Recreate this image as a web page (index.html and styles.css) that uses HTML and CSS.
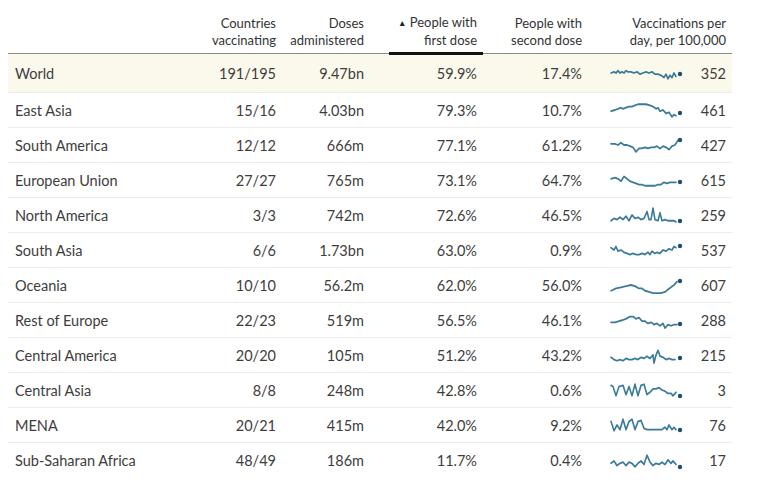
FILE: index.html
```html
<!DOCTYPE html>
<html>
<head>
<meta charset="utf-8">
<link rel="stylesheet" href="styles.css">
</head>
<body>
<div class="table">
  <div class="row head">
    <div class="cell name"></div>
    <div class="cell num">Countries<br>vaccinating</div>
    <div class="cell num">Doses<br>administered</div>
    <div class="cell num sorted"><span class="tri">▲</span> People with<br>first dose</div>
    <div class="cell num">People with<br>second dose</div>
    <div class="cell num wide">Vaccinations per<br>day, per 100,000</div>
  </div>

  <div class="row world">
    <div class="cell name">World</div>
    <div class="cell num">191/195</div>
    <div class="cell num">9.47bn</div>
    <div class="cell num first">59.9%</div>
    <div class="cell num">17.4%</div>
    <div class="cell spark"><svg viewBox="0 0 74 16" width="74" height="16"><polyline points="1,8 4,7 6,8 8,6 10,8 12,7 14,8 16,6 18,7 21,7 24,8 27,7 30,9 33,8 36,7 39,8 42,7 45,9 48,9 51,10 54,12 56,9 58,13 60,10 62,12 64,8 66,11"/><circle cx="70" cy="9" r="2.2"/></svg></div>
    <div class="cell num val">352</div>
  </div>

  <div class="row">
    <div class="cell name">East Asia</div>
    <div class="cell num">15/16</div>
    <div class="cell num">4.03bn</div>
    <div class="cell num first">79.3%</div>
    <div class="cell num">10.7%</div>
    <div class="cell spark"><svg viewBox="0 0 74 16" width="74" height="16"><polyline points="1,9 5,8 8,7 11,6 13,7 16,6 19,5 22,5 25,4 28,3 32,3 36,3 40,4 43,5 46,7 48,6 50,9 53,8 56,11 59,10 62,14 64,12 66,13"/><circle cx="70" cy="11" r="2.2"/></svg></div>
    <div class="cell num val">461</div>
  </div>

  <div class="row">
    <div class="cell name">South America</div>
    <div class="cell num">12/12</div>
    <div class="cell num">666m</div>
    <div class="cell num first">77.1%</div>
    <div class="cell num">61.2%</div>
    <div class="cell spark"><svg viewBox="0 0 74 16" width="74" height="16"><polyline points="1,7 5,7 8,8 11,6 14,8 17,8 20,9 23,10 26,14 29,11 32,11 35,10 38,11 41,10 44,10 47,9 50,11 53,9 56,10 59,12 62,9 65,8 68,4"/><circle cx="70" cy="3" r="2.2"/></svg></div>
    <div class="cell num val">427</div>
  </div>

  <div class="row">
    <div class="cell name">European Union</div>
    <div class="cell num">27/27</div>
    <div class="cell num">765m</div>
    <div class="cell num first">73.1%</div>
    <div class="cell num">64.7%</div>
    <div class="cell spark"><svg viewBox="0 0 74 16" width="74" height="16"><polyline points="1,7 5,6 8,7 11,9 14,5 17,7 20,9 23,10 26,11 29,12 32,12 35,13 38,13 42,13 45,13 48,12 51,12 54,10 57,11 60,10 63,10 66,10"/><circle cx="70" cy="10" r="2.2"/></svg></div>
    <div class="cell num val">615</div>
  </div>

  <div class="row">
    <div class="cell name">North America</div>
    <div class="cell num">3/3</div>
    <div class="cell num">742m</div>
    <div class="cell num first">72.6%</div>
    <div class="cell num">46.5%</div>
    <div class="cell spark"><svg viewBox="0 0 74 16" width="74" height="16"><polyline points="1,13 4,11 7,12 10,10 13,12 16,9 19,13 22,8 25,11 28,10 31,12 34,11 37,5 39,12 41,12 43,2 45,12 48,13 50,6 52,13 55,12 58,13 61,13 64,13 66,14"/><circle cx="70" cy="14" r="2.2"/></svg></div>
    <div class="cell num val">259</div>
  </div>

  <div class="row">
    <div class="cell name">South Asia</div>
    <div class="cell num">6/6</div>
    <div class="cell num">1.73bn</div>
    <div class="cell num first">63.0%</div>
    <div class="cell num">0.9%</div>
    <div class="cell spark"><svg viewBox="0 0 74 16" width="74" height="16"><polyline points="1,6 4,8 6,5 8,9 11,8 14,10 17,11 20,12 23,11 26,12 29,12 32,11 35,12 38,10 40,12 42,9 45,11 47,10 50,11 53,8 56,9 59,7 62,8 64,5 66,6"/><circle cx="70" cy="4" r="2.2"/></svg></div>
    <div class="cell num val">537</div>
  </div>

  <div class="row">
    <div class="cell name">Oceania</div>
    <div class="cell num">10/10</div>
    <div class="cell num">56.2m</div>
    <div class="cell num first">62.0%</div>
    <div class="cell num">56.0%</div>
    <div class="cell spark"><svg viewBox="0 0 74 16" width="74" height="16"><polyline points="1,13 6,11 11,10 16,9 21,8 25,9 29,11 32,11 35,13 39,14 43,15 47,15 51,15 55,14 58,12 61,10 64,8 67,5"/><circle cx="70" cy="4" r="2.2"/></svg></div>
    <div class="cell num val">607</div>
  </div>

  <div class="row">
    <div class="cell name">Rest of Europe</div>
    <div class="cell num">22/23</div>
    <div class="cell num">519m</div>
    <div class="cell num first">56.5%</div>
    <div class="cell num">46.1%</div>
    <div class="cell spark"><svg viewBox="0 0 74 16" width="74" height="16"><polyline points="1,10 5,10 9,9 13,8 16,7 20,5 23,5 26,7 29,6 32,9 35,9 38,11 41,10 44,12 47,11 50,13 53,11 55,15 58,12 61,13 64,12 67,12"/><circle cx="70" cy="12" r="2.2"/></svg></div>
    <div class="cell num val">288</div>
  </div>

  <div class="row">
    <div class="cell name">Central America</div>
    <div class="cell num">20/20</div>
    <div class="cell num">105m</div>
    <div class="cell num first">51.2%</div>
    <div class="cell num">43.2%</div>
    <div class="cell spark"><svg viewBox="0 0 74 16" width="74" height="16"><polyline points="1,10 4,12 7,13 10,12 13,13 16,11 19,12 22,12 25,11 28,12 31,10 34,11 37,9 40,11 43,8 44,15 46,8 48,4 50,9 53,10 56,12 59,11 62,12 65,12"/><circle cx="70" cy="11" r="2.2"/></svg></div>
    <div class="cell num val">215</div>
  </div>

  <div class="row">
    <div class="cell name">Central Asia</div>
    <div class="cell num">8/8</div>
    <div class="cell num">248m</div>
    <div class="cell num first">42.8%</div>
    <div class="cell num">0.6%</div>
    <div class="cell spark"><svg viewBox="0 0 74 16" width="74" height="16"><polyline points="1,4 3,5 6,13 9,5 13,4 16,12 19,5 22,13 25,3 28,13 31,4 34,3 37,12 40,10 43,7 46,7 49,6 52,8 55,9 58,11 61,11 63,13 66,10"/><circle cx="70" cy="14" r="2.2"/></svg></div>
    <div class="cell num val">3</div>
  </div>

  <div class="row">
    <div class="cell name">MENA</div>
    <div class="cell num">20/21</div>
    <div class="cell num">415m</div>
    <div class="cell num first">42.0%</div>
    <div class="cell num">9.2%</div>
    <div class="cell spark"><svg viewBox="0 0 74 16" width="74" height="16"><polyline points="1,5 4,13 7,8 10,12 13,3 16,12 19,5 22,3 25,12 28,5 31,4 34,11 37,12 42,12 47,12 52,12 55,10 57,12 59,8 62,12 64,10 66,12"/><circle cx="70" cy="13" r="2.2"/></svg></div>
    <div class="cell num val">76</div>
  </div>

  <div class="row">
    <div class="cell name">Sub-Saharan Africa</div>
    <div class="cell num">48/49</div>
    <div class="cell num">186m</div>
    <div class="cell num first">11.7%</div>
    <div class="cell num">0.4%</div>
    <div class="cell spark"><svg viewBox="0 0 74 16" width="74" height="16"><polyline points="1,10 4,8 7,12 10,10 13,9 16,12 19,9 22,10 25,13 28,10 31,8 34,11 37,3 40,9 43,12 46,10 49,11 52,9 55,11 58,7 61,10 63,8 66,11"/><circle cx="70" cy="14" r="2.2"/></svg></div>
    <div class="cell num val">17</div>
  </div>
</div>
</body>
</html>
```

FILE: styles.css
```css
* { box-sizing: border-box; }
html, body { margin: 0; padding: 0; background: #ffffff; }
body {
  padding: 0 0 0 8px;
  font-family: "Lato", "Open Sans", sans-serif;
  color: #3d3d3d;
}
.table {
  width: 724px;
}
.row {
  display: grid;
  grid-template-columns: 192px 82px 88px 113px 105px 102px 42px;
  align-items: center;
  height: 35px;
  border-bottom: 1px solid #ececec;
  font-size: 14.5px;
}
.row:last-child { border-bottom: none; }
.row.head {
  height: 54px;
  align-items: end;
  border-bottom: 1px solid #8c8c8c;
  font-size: 13px;
  line-height: 17px;
  padding-bottom: 4px;
  color: #333;
}
.row.head .wide { grid-column: span 2; }
.row.world {
  height: 39px;
  background: #fbf9ec;
  border-bottom: 1px solid #ececec;
}
.cell { padding: 0 6px; white-space: nowrap; }
.name { padding-left: 7px; }
.num { text-align: right; }
.head .sorted {
  margin-left: 19px;
  position: relative;
}
.head .sorted::after {
  content: "";
  position: absolute;
  left: 0;
  right: 0;
  bottom: -6px;
  height: 3px;
  background: #111;
}
.tri {
  font-size: 8.5px;
  vertical-align: 1px;
  color: #222;
}
.spark {
  padding: 0 0 0 22px;
  display: flex;
  align-items: center;
}
.spark svg { display: block; overflow: visible; }
.spark polyline {
  fill: none;
  stroke: #3b7a98;
  stroke-width: 1.6;
  stroke-linejoin: round;
  stroke-linecap: round;
  transform: scaleY(1.15);
  transform-origin: 50% 50%;
  transform-box: view-box;
}
.spark circle { fill: #1d4f6e; }
.val { padding-right: 6px; }
```
